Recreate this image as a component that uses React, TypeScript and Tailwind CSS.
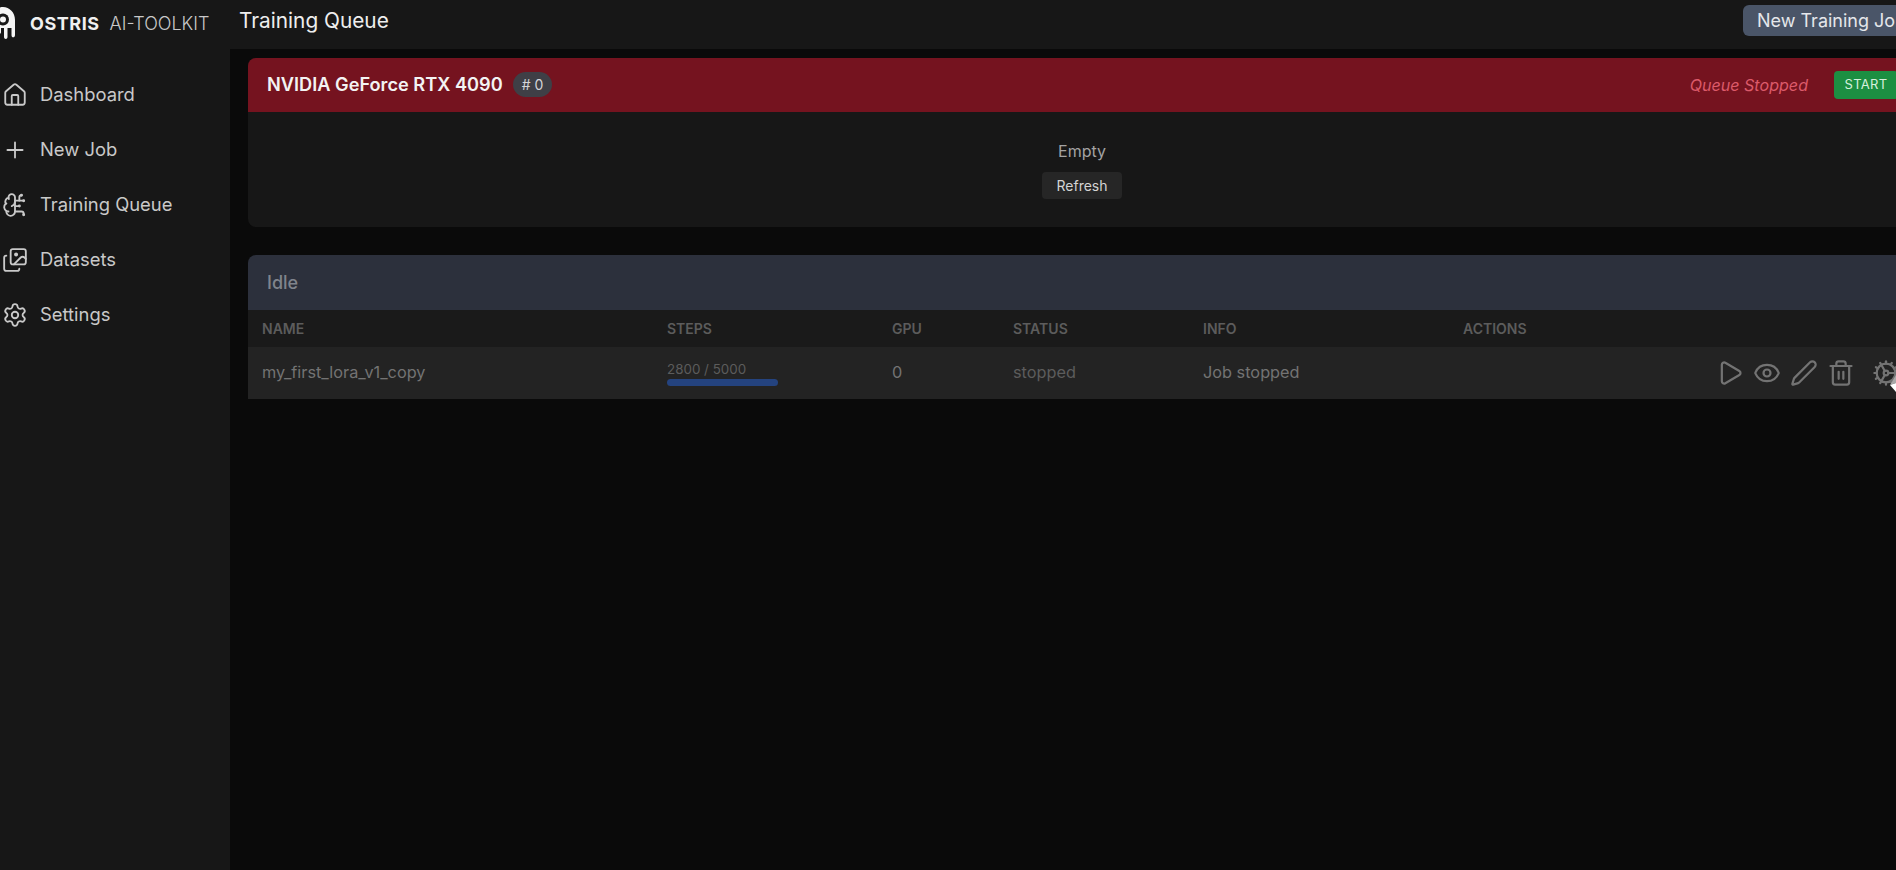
import React from 'react';
import { Home, Plus, BrainCircuit, Images, Settings, Play, Eye, Pen, Trash2, Cog } from 'lucide-react';

const navItems = [
  { label: 'Dashboard', icon: Home },
  { label: 'New Job', icon: Plus },
  { label: 'Training Queue', icon: BrainCircuit },
  { label: 'Datasets', icon: Images },
  { label: 'Settings', icon: Settings },
];

const columns = 'grid grid-cols-[405px_225px_121px_190px_260px_1fr] items-center px-3.5';

const Logo = () => (
  <svg width="26" height="33" viewBox="0 0 26 33" fill="none" className="-ml-[2px] mt-[1px] shrink-0">
    <path
      d="M1 27V13C1 5.500 6.500 0 13 0s12 5.500 12 13v15c0 1.500-.8 2.300-1.800 2.300s-1.700-.8-1.700-2.300v-7h-4v9c0 1.300-.8 2-1.700 2s-1.800-.7-1.800-2v-9h-3v4c0 1.200-.7 1.800-1.500 1.800S9 25.200 9 24v-3H5v6c0 1.200-.6 1.800-1.500 1.800S1 28.200 1 27z"
      fill="#f5f5f5"
    />
    <circle cx="13" cy="12.500" r="6" fill="#171717" />
    <circle cx="13" cy="12.500" r="3" fill="#f5f5f5" />
  </svg>
);

const App = () => {
  return (
    <div className="h-[870px] w-[1896px] overflow-hidden bg-[#0a0a0a] font-['Inter',sans-serif]">
      <div className="-ml-2 flex h-full w-[1942px]">
        {/* Sidebar */}
        <aside className="flex h-full w-[238px] shrink-0 flex-col bg-[#171717]">
          <div className="flex h-[49px] items-center gap-[14px] pb-[3px]">
            <Logo />
            <span className="text-[18px] font-bold tracking-[0.03em] text-[#f0f0f0]">OSTRIS</span>
            <span className="ml-[-4px] text-[18px] font-light text-[#c8c8c8]">AI-TOOLKIT</span>
          </div>
          <nav className="flex flex-col pt-[18px]">
            {navItems.map(item => (
              <div key={item.label} className="flex h-[55px] items-center gap-[12px] pl-[10px] text-[#c9c9c9]">
                <item.icon size={26} strokeWidth={1.7} className="shrink-0" />
                <span className="text-[18.400px]">{item.label}</span>
              </div>
            ))}
          </nav>
        </aside>

        {/* Main */}
        <div className="flex min-w-0 flex-1 flex-col">
          <header className="flex h-[49px] shrink-0 items-center justify-between bg-[#171717] pl-[9px]">
            <h1 className="pb-[8px] text-[20.800px] text-[#eeeeee]">Training Queue</h1>
            <button className="mb-[8px] mr-[3px] h-[31px] w-[188px] overflow-hidden whitespace-nowrap rounded-md bg-[#4a5568] pl-[14px] text-left text-[18px] text-[#e5e7eb]">
              New Training Job
            </button>
          </header>

          <main className="flex flex-col gap-[28px] px-[18px] pt-[9px]">
            {/* Queue card */}
            <section className="overflow-hidden rounded-lg bg-[#171717]">
              <div className="flex h-[54px] items-center justify-between bg-[#75131f] pl-[19px] pr-[18px]">
                <div className="flex items-center gap-[10px]">
                  <span className="text-[18.200px] font-semibold text-[#f3f3f3]">NVIDIA GeForce RTX 4090</span>
                  <span className="rounded-full bg-[#3f3f46] px-[9px] py-0.5 text-[14px] text-[#d4d4d8]"># 0</span>
                </div>
                <div className="flex items-center gap-[26px]">
                  <span className="text-[16.100px] italic text-[#dc5a6a]">Queue Stopped</span>
                  <button className="h-[28px] w-[64px] rounded bg-[#1c8f42] text-[13px] tracking-wide text-[#d6f0dd]">START</button>
                </div>
              </div>
              <div className="flex h-[115px] flex-col items-center pt-[29px]">
                <p className="text-[16px] leading-[20px] text-[#a3a3a3]">Empty</p>
                <button className="mt-[11px] h-[27px] rounded bg-[#262626] px-[14px] text-[14px] text-[#d4d4d4]">Refresh</button>
              </div>
            </section>

            {/* Idle card */}
            <section className="overflow-hidden rounded-t-lg">
              <div className="flex h-[55px] items-center bg-[#2c303c] pl-[19px] text-[18px] font-medium text-[#80848c]">Idle</div>
              <div className={`${columns} h-[37px] bg-[#1a1a1a] pb-[1px] text-[14px] font-semibold text-[#5c5c5c]`}>
                <span>NAME</span>
                <span>STEPS</span>
                <span>GPU</span>
                <span>STATUS</span>
                <span>INFO</span>
                <span>ACTIONS</span>
              </div>
              <div className={`${columns} relative h-[52px] bg-[#232323] text-[16.300px] text-[#737373]`}>
                <span className="-mt-[2px]">my_first_lora_v1_copy</span>
                <div className="flex w-[111px] flex-col">
                  <span className="text-[13.400px] leading-[16px] text-[#5c5c5c]">2800 / 5000</span>
                  <div className="mt-[2px] h-[7px] rounded-full bg-[#24437f]"></div>
                </div>
                <span className="-mt-[2px]">0</span>
                <span className="-mt-[2px] text-[#5c5c5c]">stopped</span>
                <span className="-mt-[2px]">Job stopped</span>
                <div className="flex items-center justify-end gap-[9px] pr-[2px] text-[#737373]">
                  <Play size={28} strokeWidth={1.9} />
                  <Eye size={28} strokeWidth={1.9} />
                  <Pen size={28} strokeWidth={1.9} />
                  <Trash2 size={28} strokeWidth={1.9} />
                  <Cog size={28} strokeWidth={1.9} className="ml-[8px]" />
                </div>
                <svg width="6" height="17" viewBox="0 0 6 17" className="absolute left-[1642px] top-[28px]">
                  <path d="M6 0L0 10l6-2z" fill="#a8a8a8" />
                  <path d="M6 8L0 10l6 7z" fill="#ffffff" />
                </svg>
              </div>
            </section>
          </main>
        </div>
      </div>
    </div>
  );
};

export default App;
